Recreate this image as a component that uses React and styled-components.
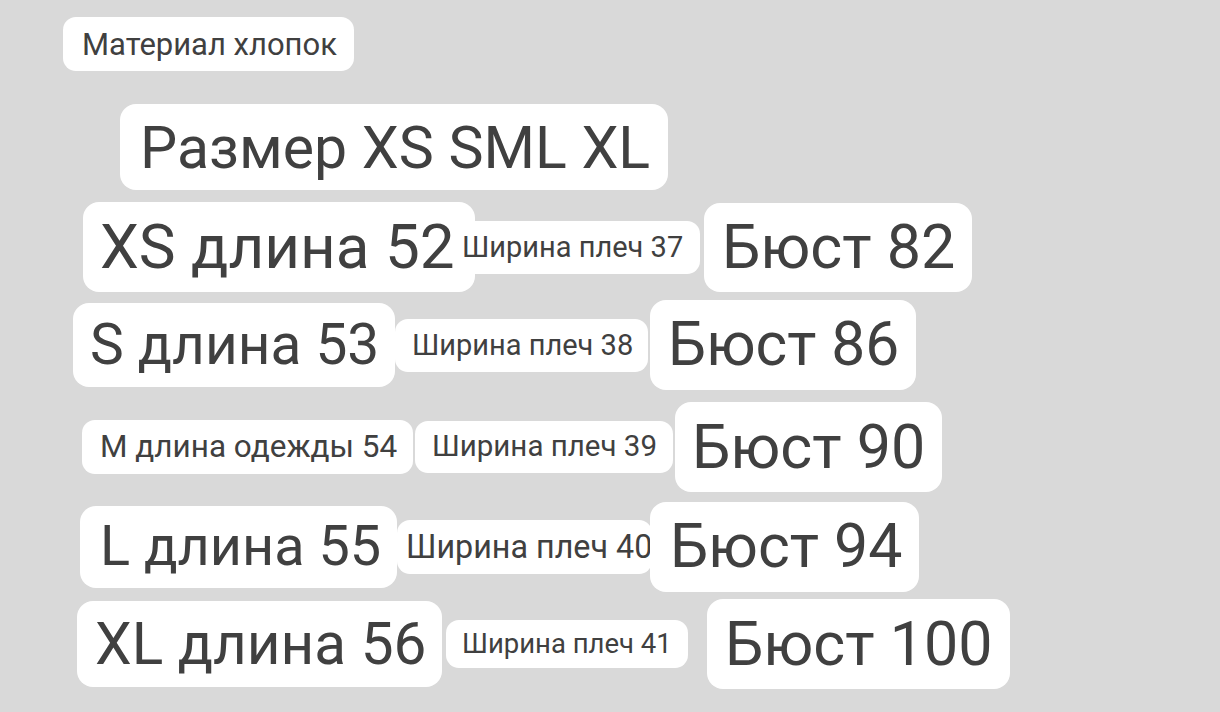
import React from "react";
import styled, { createGlobalStyle } from "styled-components";

const Global = createGlobalStyle`
  html, body {
    margin: 0;
    padding: 0;
    background: #d9d9d9;
  }
  body {
    width: 1220px;
    height: 712px;
    overflow: hidden;
    font-family: Roboto, "Noto Sans", sans-serif;
  }
`;

const Board = styled.main`
  display: flex;
  flex-direction: column;
  align-items: flex-start;
  width: 1220px;
  height: 712px;
  background: #d9d9d9;
`;

const Row = styled.div`
  display: flex;
  align-items: center;
  height: ${(p) => p.$h}px;
  margin-top: ${(p) => p.$mt}px;
  padding-left: ${(p) => p.$indent}px;
`;

const Tag = styled.span`
  display: flex;
  align-items: center;
  box-sizing: border-box;
  flex: none;
  width: ${(p) => p.$w}px;
  height: ${(p) => p.$h}px;
  margin-left: ${(p) => p.$ml || 0}px;
  padding-left: ${(p) => p.$pl}px;
  border-radius: ${(p) => (p.$h > 70 ? 16 : 13)}px;
  background: #ffffff;
  color: #404040;
  font-size: ${(p) => p.$fs}px;
  font-weight: 400;
  line-height: 1;
  white-space: nowrap;
`;

const header = [
  { mt: 17, h: 54, indent: 63, items: [{ t: "Материал хлопок", w: 291, h: 54, fs: 31, pl: 19 }] },
  { mt: 33, h: 86, indent: 120, items: [{ t: "Размер XS SML XL", w: 548, h: 86, fs: 59, pl: 20 }] },
];

const rows = [
  {
    mt: 12, indent: 83,
    items: [
      { t: "XS длина 52", w: 392, h: 90, fs: 62, pl: 17 },
      { t: "Ширина плеч 37", w: 245, h: 53, fs: 29, pl: 7, ml: -20 },
      { t: "Бюст 82", w: 268, h: 89, fs: 61, pl: 18, ml: 4 },
    ],
  },
  {
    mt: 8, indent: 73,
    items: [
      { t: "S длина 53", w: 322, h: 84, fs: 56.8, pl: 17 },
      { t: "Ширина плеч 38", w: 253, h: 53, fs: 29, pl: 17, ml: 0 },
      { t: "Бюст 86", w: 266, h: 90, fs: 60.5, pl: 18, ml: 2 },
    ],
  },
  {
    mt: 12, indent: 82,
    items: [
      { t: "M длина одежды 54", w: 331, h: 54, fs: 31.5, pl: 18 },
      { t: "Ширина плеч 39", w: 258, h: 52, fs: 29.5, pl: 17, ml: 2 },
      { t: "Бюст 90", w: 267, h: 90, fs: 61, pl: 17, ml: 2 },
    ],
  },
  {
    mt: 10, indent: 80,
    items: [
      { t: "L длина 55", w: 317, h: 82, fs: 55.8, pl: 20 },
      { t: "Ширина плеч 40", w: 255, h: 54, fs: 32.3, pl: 9, ml: 0 },
      { t: "Бюст 94", w: 269, h: 90, fs: 60.8, pl: 20, ml: -2 },
    ],
  },
  {
    mt: 7, indent: 77,
    items: [
      { t: "XL длина 56", w: 365, h: 86, fs: 58.5, pl: 18 },
      { t: "Ширина плеч 41", w: 242, h: 48, fs: 27.5, pl: 16, ml: 4 },
      { t: "Бюст 100", w: 303, h: 90, fs: 61, pl: 18, ml: 19 },
    ],
  },
];

function TagRow({ row, h }) {
  return (
    <Row $mt={row.mt} $h={row.h || h} $indent={row.indent}>
      {row.items.map((it, i) => (
        <Tag key={i} $w={it.w} $h={it.h} $fs={it.fs} $pl={it.pl} $ml={it.ml}>
          {it.t}
        </Tag>
      ))}
    </Row>
  );
}

export default function App() {
  return (
    <>
      <Global />
      <Board>
        {header.map((r, i) => (
          <TagRow key={"h" + i} row={r} />
        ))}
        {rows.map((r, i) => (
          <TagRow key={i} row={r} h={90} />
        ))}
      </Board>
    </>
  );
}
